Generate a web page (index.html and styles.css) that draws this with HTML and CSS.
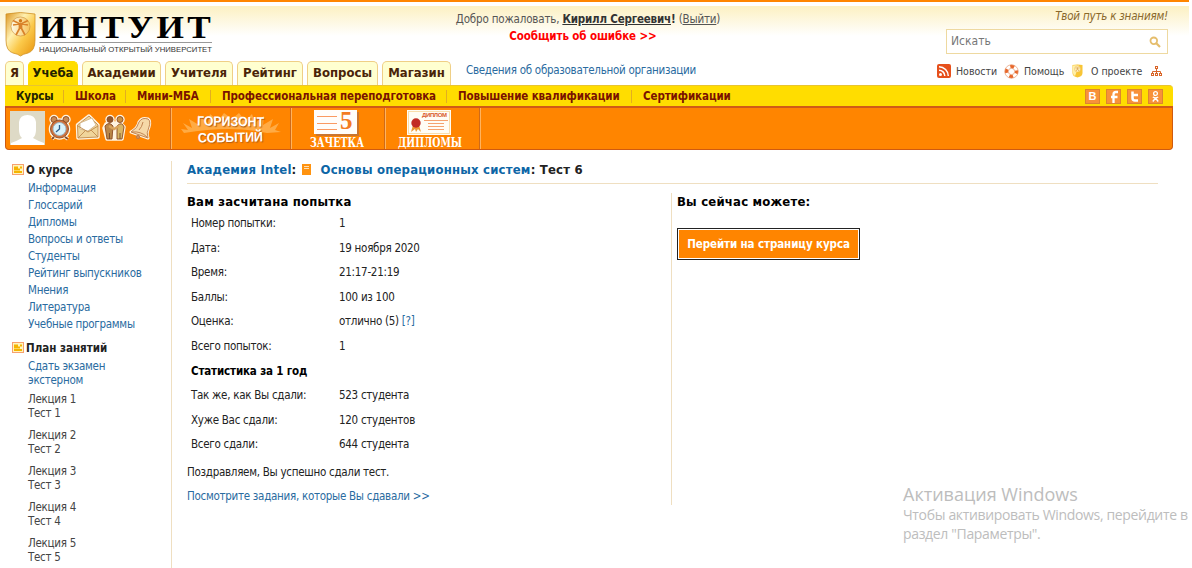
FILE: index.html
```html
<!DOCTYPE html>
<html lang="ru">
<head>
<meta charset="utf-8">
<title>ИНТУИТ</title>
<link rel="stylesheet" href="styles.css">
</head>
<body>
<div class="page">
  <header class="header">
    <svg class="logo" width="214" height="50" viewBox="0 0 214 50">
      <defs>
        <linearGradient id="gold" x1="0" y1="0" x2="1" y2="1"><stop offset="0" stop-color="#dc9420"/><stop offset=".35" stop-color="#fff0b0"/><stop offset=".6" stop-color="#fbc94a"/><stop offset="1" stop-color="#e8930c"/></linearGradient>
        <linearGradient id="orb"><stop offset="0" stop-color="#fffbe8"/><stop offset="1" stop-color="#f6c258"/></linearGradient>
      </defs>
      <path d="M1 3Q15 0 30 3V29Q30 40 23 42Q18 43 15.500 45Q13 43 8 42Q1 40 1 29Z" fill="url(#gold)" stroke="#cf9226" stroke-width=".8"/>
      <circle cx="15.500" cy="15.500" r="9.500" fill="url(#orb)" stroke="#c98f3a" stroke-width=".6"/>
      <path d="M8 9.500L14 12.500H17L23 9.500M8 14L14 13M23 14L17 13M14.500 13V17.500L11 24M16.500 13V17.500L20 24M15.500 12V18" fill="none" stroke="#d9822a" stroke-width="1.700"/>
      <circle cx="15.500" cy="9.800" r="1.700" fill="#d07818"/>
      <text class="logo-name" x="34" y="27" textLength="175" lengthAdjust="spacingAndGlyphs">ИНТУИТ</text>
      <path d="M34.500 31.500H207" stroke="#999"/>
      <text class="logo-sub" x="34" y="41" textLength="173" lengthAdjust="spacingAndGlyphs">НАЦИОНАЛЬНЫЙ ОТКРЫТЫЙ УНИВЕРСИТЕТ</text>
    </svg>
    <div class="welcome">
      <div class="hello">Добро пожаловать, <b><u>Кирилл Сергеевич</u>!</b> (<u>Выйти</u>)</div>
      <div class="report">Сообщить об ошибке &gt;&gt;</div>
    </div>
    <div class="search-side">
      <div class="motto">Твой путь к знаниям!</div>
      <div class="search"><span>Искать</span>
        <svg width="12" height="12" viewBox="0 0 12 12" fill="none" stroke="#e5bd6c"><circle cx="4.800" cy="4.800" r="3.300" stroke-width="1.800"/><path d="M7.300 7.300L11 11" stroke-width="2.200"/></svg>
      </div>
    </div>
  </header>

  <div class="tabs-row">
    <nav class="tabs">
      <span class="tab t1">Я</span><span class="tab t2 active">Учеба</span><span class="tab t3">Академии</span><span class="tab t4">Учителя</span><span class="tab t5">Рейтинг</span><span class="tab t6">Вопросы</span><span class="tab t7">Магазин</span>
    </nav>
    <a class="org">Сведения об образовательной организации</a>
    <div class="quick">
      <svg class="q-rss" width="14" height="14" viewBox="0 0 14 14"><rect width="14" height="14" rx="2" fill="#e6501c"/><circle cx="3.500" cy="10.500" r="1.500" fill="#fff"/><path d="M2 6.200A5.800 5.800 0 0 1 7.800 12M2 2.700A9.300 9.300 0 0 1 11.300 12" fill="none" stroke="#fff" stroke-width="1.500"/></svg>
      <span class="q1">Новости</span>
      <svg class="q-help" width="15" height="15" viewBox="0 0 15 15" fill="none"><circle cx="7.500" cy="7.500" r="5" stroke="#fff" stroke-width="3.400"/><circle cx="7.500" cy="7.500" r="5" stroke="#e8672a" stroke-width="3.400" stroke-dasharray="3.900 3.954" stroke-dashoffset="-6"/><circle cx="7.500" cy="7.500" r="6.700" stroke="#e59a72" stroke-width=".7"/><circle cx="7.500" cy="7.500" r="3.200" stroke="#e59a72" stroke-width=".7"/></svg>
      <span class="q2">Помощь</span>
      <svg class="q-about" width="11" height="14" viewBox="0 0 11 14"><path d="M.5 1Q5.500 0 10.500 1V9Q10.500 12.500 5.500 13.500Q.5 12.500 .5 9Z" fill="#f8c535"/><path d="M1 1.500Q4 .8 7 1.500L3 12Q1 11 1 9Z" fill="#fff0a8"/><circle cx="5.500" cy="5" r="3" fill="#fff3ba" stroke="#eeb550" stroke-width=".5"/><path d="M3.500 4H7.500M5.500 3.500V5L4 7M5.500 5L7 7" fill="none" stroke="#d79a4a" stroke-width=".7"/></svg>
      <span class="q3">О проекте</span>
      <svg class="q-map" width="11" height="11" viewBox="0 0 11 11" fill="#fff" stroke="#d96528"><path d="M5.500 3V7M1.500 7V5.500H9.500V7" fill="none"/><rect x="4.500" y=".5" width="2" height="2"/><rect x=".5" y="7.500" width="2" height="2"/><rect x="4.500" y="7.500" width="2" height="2"/><rect x="8.500" y="7.500" width="2" height="2"/></svg>
    </div>
  </div>

  <nav class="subnav">
    <span class="s1 current">Курсы</span><i></i><span class="s2">Школа</span><i></i><span class="s3">Мини-МБА</span><i></i><span class="s4">Профессиональная переподготовка</span><i></i><span class="s5">Повышение квалификации</span><i></i><span class="s6">Сертификации</span>
    <div class="social">
      <b class="soc">B</b>
      <b class="soc"><svg width="15" height="15" viewBox="0 0 15 15"><path d="M12 3H10Q7.500 3 7.500 5.500V14M5 8H11.500" fill="none" stroke="#fff" stroke-width="2.300"/></svg></b>
      <b class="soc"><svg width="15" height="15" viewBox="0 0 15 15"><path d="M5.500 2.500V9Q5.500 11.500 8 11.500H11M5.500 6H11" fill="none" stroke="#fff" stroke-width="2.500"/></svg></b>
      <b class="soc"><svg width="15" height="15" viewBox="0 0 15 15" fill="none" stroke="#fff"><circle cx="7.500" cy="4.500" r="1.900" stroke-width="1.300"/><path d="M4.800 8Q7.500 9.800 10.200 8M7.500 9L4.800 12.500M7.500 9L10.200 12.500" stroke-width="1.400"/></svg></b>
    </div>
  </nav>

  <div class="toolbar">
    <div class="cell user">
      <svg width="165" height="41" viewBox="1 0 165 41">
        <rect x="5" y="3" width="35" height="34" fill="#dedac6"/>
        <path d="M6 37V35Q12 33 17 30Q14 27 14 22V14Q15 7 22.500 7Q30 7 31 14V22Q31 27 28 30Q33 33 39 35V37Z" fill="#fff"/>
        <g stroke="#fff3df" stroke-width="3.500" fill="#fff3df" stroke-linejoin="round">
          <circle cx="54.500" cy="21" r="9"/><circle cx="49" cy="11.500" r="3"/><circle cx="61" cy="11.500" r="3"/><path d="M49 29L47 31M60 29L63 31"/>
          <path d="M72.500 17L84 8L93 17V29L73 30Z"/>
        </g>
        <g stroke="#fff3df" stroke-width="3.500" fill="#fff3df" stroke-linejoin="round" transform="translate(-1 0)">
          <circle cx="106" cy="11.500" r="3"/><circle cx="116" cy="11.500" r="3"/><path d="M102 16L107 15L116 15L120 19L118 31H103L100 20Z"/>
        </g>
        <g stroke="#8b4b24" stroke-width=".9">
          <circle cx="49" cy="11.500" r="3" fill="#c98a54"/><circle cx="61" cy="11.500" r="3" fill="#c98a54"/><path d="M49 29L47 31M60 29L63 31" stroke-width="2"/>
          <circle cx="54.500" cy="21" r="9" fill="#d0713c"/><circle cx="54.500" cy="21" r="6.500" fill="#d9f2fb" stroke="#9ab6c4"/><path d="M54.500 17V21L51 24" fill="none" stroke="#2c5d8b" stroke-width="1.300"/>
          <path d="M72.500 17L84 8L93 17V29L73 30Z" fill="#f0d59b" stroke="#c08a4d"/><path d="M75 15L87 10L91 17L83 23L75 21Z" fill="#fff" stroke="#d1b58c"/><path d="M73 18L83 24L93 18M73 30L80 23M93 29L86 22" fill="none" stroke="#c08a4d"/>
          <g transform="translate(-1 0)"><path d="M101 18Q105 13 109 18L108 31H103Z" fill="#b98648"/><path d="M113 18Q118 13 120 19L118 31H113Z" fill="#d8b665"/><circle cx="106" cy="11.500" r="3" fill="#94582c"/><circle cx="116" cy="11.500" r="3" fill="#c99043"/><path d="M105 18L110 21L115 18" fill="none" stroke="#d9a35c" stroke-width="2.500"/><path d="M105.500 25V31M116 25V31" fill="none" stroke="#73492c"/></g>
        </g>
        <g transform="translate(-1 0)" stroke="#bb7b48" stroke-width=".9">
          <path d="M127 24Q134 20 135 14Q138 9 144 11Q147 13 145 19Q142 25 144 30Z" fill="#fff3df" stroke="#fff3df" stroke-width="3" stroke-linejoin="round"/>
          <path d="M127 24Q134 20 135 14Q138 9 144 11Q147 13 145 19Q142 25 144 30Z" fill="#f6d8a8"/><path d="M128 24Q137 23 143 29M139 14Q138 19 135 22" fill="none"/><circle cx="134" cy="29" r="1.700" fill="#cf8c55"/>
        </g>
      </svg>
    </div>
    <div class="cell horizon">
      <svg width="119" height="41" viewBox="0 0 119 41">
        <g fill="#ffcb7c" opacity=".55"><path d="M12 25L9 21L16 22L11 15L20 20L17 11L27 17L26 7L36 15L38 6L46 13L52 5L60 11L67 5L73 13L80 6L83 15L92 8L91 17L101 11L98 20L107 15L103 22L109 24L95 25Q60 17 12 25Z"/></g>
        <g class="horizon-text"><text x="25" y="18" textLength="67" lengthAdjust="spacingAndGlyphs" transform="rotate(1 59 15)">ГОРИЗОНТ</text><text x="26" y="34" textLength="65" lengthAdjust="spacingAndGlyphs" transform="rotate(-1 59 30)">СОБЫТИЙ</text></g>
      </svg>
    </div>
    <div class="cell record">
      <svg width="93" height="41" viewBox="0 0 93 41"><path d="M24 27H66V4" fill="none" stroke="#c9752f" stroke-width="2"/><rect x="22" y="2" width="43" height="24" fill="#fffdfa"/><path d="M25 8.500H45M25 15.500H45M25 21.500H45" stroke="#fa9a62"/><text class="mark" x="48" y="21">5</text><text class="caption" x="18" y="38.500" textLength="54" lengthAdjust="spacingAndGlyphs">ЗАЧЕТКА</text></svg>
    </div>
    <div class="cell diplomas">
      <svg width="93" height="41" viewBox="0 0 93 41"><rect x="21" y="2" width="44" height="25" fill="#fffdf5"/><rect x="22.500" y="3.500" width="41" height="22" fill="none" stroke="#f2bf62" stroke-dasharray="1 1"/><text class="tiny" x="36" y="9" textLength="25">ДИПЛОМ</text><path d="M38 12.500H62M42 15.500H58M42 18.500H58M42 21.500H58" stroke="#f5a36f"/><path d="M27 17L25 24L29 21L30 24L32 21L35 24L33 17Z" fill="#ec9833"/><circle cx="30" cy="15" r="4.700" fill="#c22c25"/><text class="caption" x="12" y="38.500" textLength="64" lengthAdjust="spacingAndGlyphs">ДИПЛОМЫ</text></svg>
    </div>
  </div>

  <div class="columns">
    <aside class="sidebar">
      <h3><svg width="12" height="11" viewBox="0 0 12 11"><rect x=".5" y=".5" width="11" height="10" fill="#fff5bd" stroke="#f7a06f"/><path d="M2 3.500H6M8 3.500H10M2 5.500H8M2 8H10" stroke="#f5b400" stroke-width="1.800"/></svg><span>О курсе</span></h3>
      <ul class="links">
        <li>Информация</li><li>Глоссарий</li><li>Дипломы</li><li>Вопросы и ответы</li><li>Студенты</li><li>Рейтинг выпускников</li><li>Мнения</li><li>Литература</li><li>Учебные программы</li>
      </ul>
      <h3><svg width="12" height="11" viewBox="0 0 12 11"><rect x=".5" y=".5" width="11" height="10" fill="#fff5bd" stroke="#f7a06f"/><path d="M2 3.500H6M8 3.500H10M2 5.500H8M2 8H10" stroke="#f5b400" stroke-width="1.800"/></svg><span>План занятий</span></h3>
      <div class="lessons">
        <p class="exam">Сдать экзамен<br>экстерном</p>
        <p>Лекция 1<br>Тест 1</p><p>Лекция 2<br>Тест 2</p><p>Лекция 3<br>Тест 3</p><p>Лекция 4<br>Тест 4</p><p>Лекция 5<br>Тест 5</p>
      </div>
    </aside>
    <main class="main">
      <h1><a>Академия Intel</a>:<svg width="9" height="11" viewBox="0 0 9 11"><rect width="9" height="11" fill="#ff9310"/><path d="M2 2.500H7M2 4.500H7" stroke="#ffe0b5"/></svg><a>Основы операционных систем</a>: Тест 6</h1>
      <div class="panes">
        <section class="result">
          <h2>Вам засчитана попытка</h2>
          <dl>
            <dt>Номер попытки:</dt><dd>1</dd>
            <dt>Дата:</dt><dd>19 ноября 2020</dd>
            <dt>Время:</dt><dd>21:17-21:19</dd>
            <dt>Баллы:</dt><dd>100 из 100</dd>
            <dt>Оценка:</dt><dd>отлично (5) <a>[?]</a></dd>
            <dt>Всего попыток:</dt><dd>1</dd>
            <dt class="stat">Статистика за 1 год</dt>
            <dt>Так же, как Вы сдали:</dt><dd>523 студента</dd>
            <dt>Хуже Вас сдали:</dt><dd>120 студентов</dd>
            <dt>Всего сдали:</dt><dd>644 студента</dd>
          </dl>
          <p class="congrats">Поздравляем, Вы успешно сдали тест.</p>
          <p class="review"><a>Посмотрите задания, которые Вы сдавали &gt;&gt;</a></p>
        </section>
        <section class="next">
          <h2>Вы сейчас можете:</h2>
          <button class="go">Перейти на страницу курса</button>
        </section>
      </div>
    </main>
  </div>
</div>
<div class="watermark">
  <div class="wm1">Активация Windows</div>
  <div>Чтобы активировать Windows, перейдите в</div>
  <div>раздел "Параметры".</div>
</div>
</body>
</html>
```
FILE: styles.css
```css
* { box-sizing: border-box; }
body { margin: 0; width: 1192px; height: 568px; overflow: hidden; background: #fff; color: #222; font: 11.5px/17px "DejaVu Sans Condensed", "DejaVu Sans", sans-serif; font-stretch: condensed; letter-spacing: -.28px; white-space: nowrap; }
h1, h2, h3, p, ul, dl, dd { margin: 0; padding: 0; list-style: none; }
svg { display: block; flex: none; letter-spacing: 0; }
.page { width: 1189px; height: 568px; overflow: hidden; border-top: 2px solid #ff8500; padding: 4px 16px 0 5px; background: linear-gradient(#fcf0c2, #fff) 0 4px / 100% 30px no-repeat; }
.header { display: flex; height: 54px; }
.logo { margin: 5px -2px 0 0; overflow: visible; }
.logo-name { font: bold 32px "Liberation Serif", serif; letter-spacing: 3px; fill: #000; }
.logo-sub { font: 8px "Liberation Sans", sans-serif; fill: #333; }
.welcome { width: 270px; margin-left: 236px; padding-top: 5px; text-align: center; line-height: 17px; letter-spacing: -.18px; color: #555; }
.welcome b { color: #333; }
.report { color: #f00; font-weight: bold; line-height: 16px; letter-spacing: -.1px; margin-left: -10px; }
.search-side { width: 223px; margin-left: 222px; flex: none; }
.motto { text-align: right; font-style: italic; line-height: 16px; padding-top: 2px; letter-spacing: -.2px; color: #8a682b; }
.search { display: flex; justify-content: space-between; align-items: center; width: 222px; height: 25px; margin: 5px 0 0 1px; padding: 0 6px 0 4px; border: 1px solid #eed9a0; background: #fff; color: #777; font-size: 12px; letter-spacing: 0; }
.tabs-row { display: flex; height: 25px; }
.tabs { display: flex; gap: 4px; padding-top: 1px; width: 447px; letter-spacing: 0; }
.tab { height: 24px; border: 1px solid #efcf86; border-bottom: 0; border-radius: 5px 5px 0 0; background: #ffffd0; color: #4a2408; font-weight: bold; font-size: 13px; line-height: 22px; display: flex; justify-content: center; }
.tab.active { background: #fd0; border-color: #fd0; color: #220; }
.t1 { width: 19px; } .t2 { width: 50px; } .t3 { width: 79px; } .t4 { width: 68px; } .t5 { width: 66px; } .t6 { width: 71px; } .t7 { width: 69px; }
a, .links, .exam { color: #2a6b9f; }
.org { margin: 2px 0 0 14px; width: 230px; }
.quick { display: flex; align-items: center; margin-left: auto; width: 236px; height: 22px; font-size: 10.5px; letter-spacing: 0; color: #444; }
.q1 { width: 39px; margin-left: 5px; } .q-help { margin-left: 9px; } .q2 { width: 39px; margin-left: 5px; } .q-about { margin-left: 9px; } .q3 { width: 49px; margin-left: 8px; } .q-map { margin-left: 11px; }
.subnav { display: flex; align-items: center; height: 21px; padding: 0 10px 0 11px; background: #fd0; border-top: 1px solid #e8c430; border-radius: 0 4px 0 0; color: #7a1200; font-weight: bold; letter-spacing: -.1px; }
.current { color: #220; }
.subnav i { width: 1px; height: 13px; margin: 0 11px 0 10px; background: #e3ae20; }
.s1 { width: 37px; } .s2 { width: 40px; } .s3 { width: 63px; } .s4 { width: 214px; } .s5 { width: 163px; } .s6 { width: 88px; }
.subnav span { flex: none; }
.social { display: flex; gap: 6px; margin-left: auto; }
.soc { width: 15px; height: 15px; background: #f8913a; border: 1px solid #dc8530; color: #fff; font: bold 11px/13px "Liberation Sans", sans-serif; text-align: center; }
.soc svg { margin: -1px; }
.toolbar { display: flex; height: 44px; background: #ff8500; border: 1px solid #cf5a10; border-top: 2px solid #d05a17; border-radius: 0 0 4px 4px; }
.cell { border-right: 1px solid #ffb35d; box-shadow: inset -1px 0 #cf6a18; overflow: hidden; }
.user { width: 166px; } .horizon { width: 120px; } .record { width: 94px; } .diplomas { width: 95px; }
.horizon-text { font: bold 13.5px "Liberation Sans", sans-serif; fill: #fff; text-shadow: 1px 1px 1px #b45c10; }
.mark { font: bold 25px "Liberation Serif", serif; fill: #f37b22; }
.caption { font: bold 12.5px "DejaVu Serif Condensed", "DejaVu Serif", serif; fill: #fff; }
.tiny { font: bold 6px "Liberation Sans", sans-serif; fill: #d85a2c; }
.columns { display: flex; height: 418px; padding-top: 11px; }
.sidebar { width: 167px; border-right: 1px solid #efdfc1; padding-left: 7px; }
.sidebar h3 { display: flex; gap: 2px; align-items: center; height: 18px; font-size: 11.5px; letter-spacing: 0; color: #222; }
.sidebar h3 svg { margin-top: -2px; }
.links { padding: 1px 0 6px 16px; line-height: 17px; }
.lessons { padding-left: 16px; line-height: 14px; color: #444; }
.lessons p { margin: 2px 0 8px; }
.lessons .exam { margin-bottom: 5px; }
.lessons p + p { margin-top: 0; }
.main { width: 986px; padding: 0 0 0 15px; }
h1 { display: flex; height: 23px; width: 971px; border-bottom: 1px solid #efdfc1; font-size: 13px; letter-spacing: .2px; line-height: 18px; white-space: pre; }
h1 a { color: #0d66a6; }
h1 svg { margin: 3px 10px 0 5px; }
.panes { display: flex; padding-top: 9px; }
.result { width: 485px; height: 312px; border-right: 1px solid #efdfc1; }
h2 { font-size: 13px; line-height: 18px; letter-spacing: .2px; color: #000; }
dl { display: grid; grid-template-columns: 148px 1fr; grid-auto-rows: 24.600px; line-height: 24.600px; padding-left: 4px; }
.stat { grid-column: 1 / 3; font-weight: bold; letter-spacing: -.15px; color: #000; }
.congrats, .review { line-height: 24px; }
.congrats { padding-top: 3px; }
.next { padding-left: 5px; }
.go { display: block; width: 183px; height: 32px; margin-top: 17px; padding: 0; border: 1px solid #222; background: #ff8500; box-shadow: inset 0 0 0 1px #fff; color: #fff; font: bold 11.5px "DejaVu Sans Condensed", sans-serif; letter-spacing: -.1px; }
.watermark { position: absolute; left: 903px; top: 483px; color: #bdbdbd; font: 14px/19px "Open Sans", sans-serif; letter-spacing: -.34px; }
.wm1 { font-size: 18px; line-height: 22px; letter-spacing: 0; }
```
